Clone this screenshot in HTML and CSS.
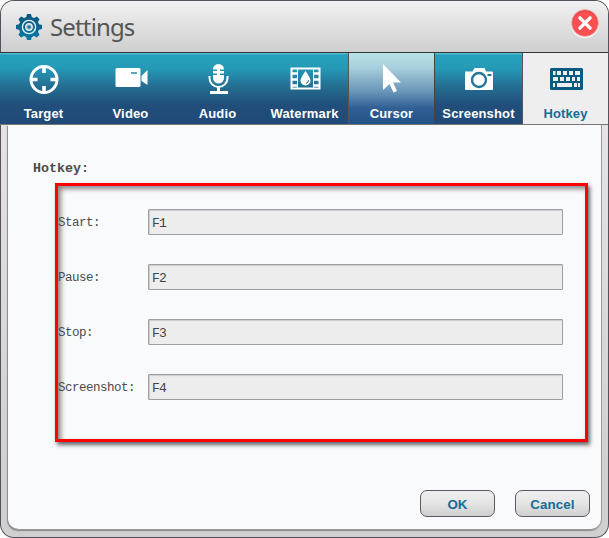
FILE: index.html
```html
<!DOCTYPE html>
<html lang="en">
<head>
<meta charset="utf-8">
<title>Settings</title>
<link rel="stylesheet" href="styles.css">
</head>
<body>
<main class="window">
  <header class="titlebar">
    <svg class="gear" viewBox="0 0 28 28">
      <defs><linearGradient id="blue" x2="0" y2="1"><stop stop-color="#08567d"/><stop offset="1" stop-color="#0878a5"/></linearGradient></defs>
      <g fill="url(#blue)">
        <circle cx="14" cy="14" r="10.3"/>
        <path d="M11 5l1-4h4l1 4zM11 23l1 4h4l1-4zM5 11l-4 1v4l4 1zM23 11l4 1v4l-4 1z"/>
        <path d="M5.500 9.700L3.400 6.200l2.800-2.800 3.500 2.100zM18.300 5.500l3.500-2.100 2.800 2.800-2.100 3.500zM22.500 18.300l2.100 3.500-2.800 2.800-3.500-2.100zM9.700 22.500l-3.500 2.100-2.800-2.800 2.100-3.500z"/>
      </g>
      <circle cx="14" cy="14" r="6.600" fill="none" stroke="#e8f1f5" stroke-width="1.400"/>
      <circle cx="14" cy="14" r="3.300" fill="#9dbfce" stroke="#e8f1f5" stroke-width="1.200"/>
      <circle cx="14" cy="14" r="1.600" fill="#176d94"/>
    </svg>
    <h1>Settings</h1>
    <button class="close" aria-label="Close"><svg viewBox="0 0 28 28"><path d="M8.500 8.500l11 11M19.500 8.500l-11 11" stroke="#fff" stroke-width="3.600" stroke-linecap="round"/></svg></button>
  </header>
  <nav class="tabs">
    <a class="tab"><svg viewBox="0 0 40 34"><circle cx="20" cy="18.500" r="13" fill="none" stroke="#fff" stroke-width="3"/><path d="M20 6v6M20 25v6M7 18.500h6.500M26.500 18.500H33" stroke="#fff" stroke-width="3.600"/></svg><span>Target</span></a>
    <a class="tab"><svg viewBox="0 0 40 34"><rect x="4.500" y="7" width="25" height="19" rx="1.500" fill="#fff"/><path d="M30.500 15l6-6v15l-6-4z" fill="#fff"/><path d="M20 12h6" stroke="#238aa8" stroke-width="1.500"/></svg><span>Video</span></a>
    <a class="tab"><svg viewBox="0 0 40 34"><path d="M15 8.500a5.500 5.500 0 0 1 11 0H22v1.500h4v2.500h-4V14h4v3a5.500 5.500 0 0 1-11 0v-3h4v-1.500h-4V10h4V8.500z" fill="#fff"/><path d="M11.500 15v2a9 9 0 0 0 18 0v-2" fill="none" stroke="#fff" stroke-width="2"/><path d="M20.500 25v6M12 31.500h18" stroke="#fff" stroke-width="3"/></svg><span>Audio</span></a>
    <a class="tab"><svg viewBox="0 0 40 34"><rect x="6.500" y="7.500" width="28" height="20" fill="none" stroke="#fff" stroke-width="2"/><path d="M12.500 7v21M28.500 7v21" stroke="#fff"/><path d="M6 12.500h6M6 18.500h6M6 24.500h6M29 12.500h6M29 18.500h6M29 24.500h6" stroke="#fff" stroke-width="2.500"/><path d="M20.500 10q-5 7-5 9.500a5 5 0 0 0 10 0q0-2.500-5-9.500z" fill="#fff"/><path d="M21 22.500q2.500-.5 2.500-3.500" fill="none" stroke="#24678b"/></svg><span>Watermark</span></a>
    <a class="tab light"><svg viewBox="0 0 40 34"><path d="M11 3v26l6.500-6 4 8.500 3.500-1.500-4-8.500h8z" fill="#fff"/></svg><span>Cursor</span></a>
    <a class="tab framed"><svg viewBox="0 0 40 34"><path d="M6 10.500h7.500l2-3.500h10l1.500 3.500h6a1 1 0 0 1 1 1V28a1 1 0 0 1-1 1H7a1 1 0 0 1-1-1z" fill="#fff"/><circle cx="20" cy="19" r="7" fill="none" stroke="#267699" stroke-width="2.400"/><path d="M28.500 14h4" stroke="#267699" stroke-width="2"/></svg><span>Screenshot</span></a>
    <a class="tab active"><svg viewBox="0 0 40 34"><rect x="4" y="7" width="33" height="22" rx="1.500" fill="#075b80"/><path d="M7 12h2.500M11 12h4M17 12h4M23 12h4M29 12h5M7 18h5M14 18h4M20 18h4M26 18h3M31 18h3M7 24h2M11 24h15M28 24h3M32 24h2" stroke="#eee" stroke-width="3.800"/></svg><span>Hotkey</span></a>
  </nav>
  <section class="content">
    <h2>Hotkey:</h2>
    <form class="fields">
      <label><span>Start:</span><input value="F1" readonly></label>
      <label><span>Pause:</span><input value="F2" readonly></label>
      <label><span>Stop:</span><input value="F3" readonly></label>
      <label><span>Screenshot:</span><input value="F4" readonly></label>
    </form>
    <footer class="actions"><button>OK</button><button>Cancel</button></footer>
  </section>
</main>
</body>
</html>
```
FILE: styles.css
```css
* { box-sizing: border-box; }
body { margin: 0; background: #fff; font-family: "Liberation Sans", sans-serif; }
.window { width: 609px; height: 538px; display: flex; flex-direction: column; border: 1px solid transparent; border-radius: 14px; background: linear-gradient(#e5e3e5 130px, #d0d0d0 480px) padding-box, linear-gradient(#55525b, #55525b) border-box; }
.titlebar { height: 51px; flex: none; display: flex; align-items: center; padding: 0 9px 0 14px; border-radius: 13px 13px 0 0; background: linear-gradient(#f1f1f1, #cfcfcf); }
.gear { width: 28px; height: 28px; }
h1 { margin: 0 0 0 7px; font: 400 24px/34px "Noto Sans", sans-serif; letter-spacing: -.85px; color: #555; }
.close { width: 28px; height: 28px; margin: -7px 0 0 auto; padding: 0; border: 1px solid #e6b5b5; border-radius: 50%; background: #fb5052; box-shadow: 0 1px 1px #fff, inset 0 1px 2px #d94040; }
.close svg { display: block; width: 26px; height: 26px; }
.tabs { flex: none; height: 73px; margin: 0 0 0 -1px; display: grid; grid-template-columns: 87px 87px 87px 87px 86px 89px 85px; border-top: 1px solid #343434; border-bottom: 1px solid #777; }
.tab { display: flex; flex-direction: column; align-items: center; padding-top: 8px; color: #fff; background: linear-gradient(#65c6d5 0, #25a1bd 2px, #259ab7 15px, #246d91 34px, #214e7b 52px, #204a78); font-weight: 700; font-size: 13px; letter-spacing: .15px; line-height: 16px; }
.tab svg { width: 40px; height: 34px; flex: none; }
.tab span { margin-top: 11px; }
.light { border-left: 1px solid #555; background: linear-gradient(#b9e2e8, #a7cedb 15px, #6894b7 39px, #305f94 55px, #21528a); }
.framed { border-left: 1px solid #444; border-right: 1px solid #555; }
.active { color: #176b97; background: #eee; }
.content { flex: 1; margin: 0 6px 7px 7px; padding: 35px 5px 0 25px; background: #f9fafc; border: solid #999b9d; border-width: 0 1px 1px 0; border-radius: 0 0 11px 11px; box-shadow: -1px 1px 1px #888; font-family: "Liberation Mono", monospace; color: #4b4b4b; }
h2 { margin: 0; font: 700 13.330px/18px "Liberation Mono", monospace; }
.fields { width: 533px; height: 259px; margin: 5px 0 0 22px; border: 3px solid #f00; padding: 23px 22px 0 0; display: flex; flex-direction: column; gap: 29px; box-shadow: 2px 3px 4px #666, inset 3px 3px 5px #888; }
.fields label { display: flex; align-items: center; height: 26px; font-size: 12.500px; letter-spacing: -.5px; }
.fields span { width: 90px; padding-top: 2px; }
.fields input { width: 415px; height: 26px; padding: 2px 3px 0; border: 1px solid #9d9ea4; border-radius: 1px; outline: 0; background: #ededed; box-shadow: inset 1px 1px 1px #ccc; font: 13px "Liberation Mono", monospace; letter-spacing: -.8px; color: #444; }
.actions { display: flex; justify-content: flex-end; gap: 20px; margin-top: 48px; padding-right: 6px; }
.actions button { width: 75px; height: 27px; padding: 2px 0 0; border: 1px solid #5c5963; border-radius: 7px; background: linear-gradient(#efefef, #e6e6e6 45%, #cfcfcf); font: 700 13.330px "Liberation Sans", sans-serif; letter-spacing: .1px; color: #176b97; }
```
